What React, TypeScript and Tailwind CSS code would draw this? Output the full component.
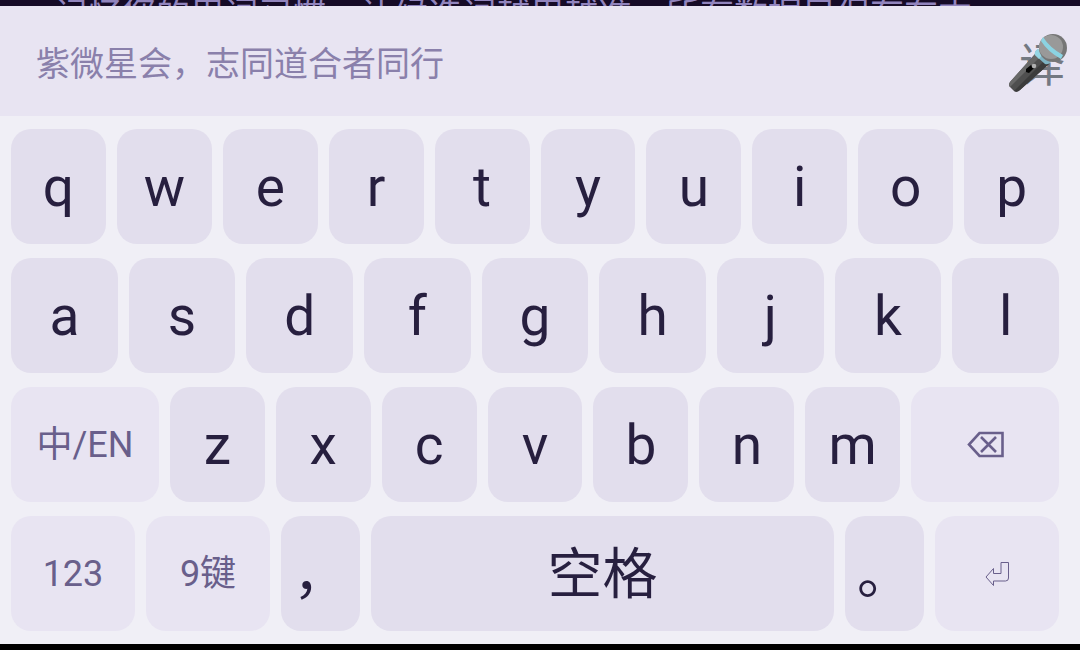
import { clsx } from "clsx";

const topRow = ["q", "w", "e", "r", "t", "y", "u", "i", "o", "p"];
const homeRow = ["a", "s", "d", "f", "g", "h", "j", "k", "l"];
const bottomRow = ["z", "x", "c", "v", "b", "n", "m"];

type KeyProps = {
  children: React.ReactNode;
  label?: string;
  width?: string;
  soft?: boolean;
};

function Key({ children, label, width = "flex-1", soft = false }: KeyProps) {
  return (
    <button
      type="button"
      aria-label={label}
      className={clsx(
        "flex h-[115px] min-w-0 items-center justify-center rounded-[20px]",
        width,
        soft
          ? "bg-[#e8e4f2] text-4xl text-[#695f8b]"
          : "bg-[#e2deed] text-[55px] leading-[64px] text-[#271f3f]"
      )}
    >
      {children}
    </button>
  );
}

function Microphone() {
  return (
    <svg viewBox="0 1 60 60" className="h-[60px] w-[60px]" aria-hidden="true">
      <path d="M28 20 L2 49 Q0 52 2 54 L6 58 Q9 60 12 57 L41 31 Z" fill="#4f4f4f" />
      <path d="M28 20 L2 49 Q0 52 2 54 L32 24 Z" fill="#686868" />
      <path d="M37 27 L6 58 Q9 60 12 57 L41 31 Z" fill="#3c3c3c" />
      <path d="M30 16 Q26 18 27 22 L37 31 Q41 32 43 28 Z" fill="#7fb4c4" />
      <path d="M30 16 Q26 18 27 22 L31 26 L35 21 Z" fill="#94d5e4" />
      <circle cx="45" cy="15" r="14" fill="#767676" />
      <circle cx="43" cy="14" r="12" fill="#999999" />
      <path d="M35 4 Q42 15 55 22 L53 26 Q40 19 33 8 Z" fill="#8bd3e2" />
      <path d="M18 36 L23 32 L26 35 L21 40 L18 39 Z" fill="#050505" />
      <circle cx="26" cy="33" r="2.3" fill="#b0b0b0" />
    </svg>
  );
}

function BackspaceIcon() {
  return (
    <svg viewBox="0 0 38 28" className="h-7 w-[38px]" fill="none" stroke="currentColor" aria-hidden="true">
      <path d="M13.5 2 H36.5 V25 H13.5 L3 13.5 Z" strokeWidth="2.6" />
      <path d="M15 6 L30 21 M30 6 L15 21" strokeWidth="2.6" />
    </svg>
  );
}

function EnterIcon() {
  return (
    <svg viewBox="0 0 26 26" className="h-[26px] w-[26px]" fill="none" stroke="currentColor" aria-hidden="true">
      <path d="M17 1.5 H24.5 V17 Q24.5 20 21.5 20 H9.5 V24.5 L2 16 L9.5 7.5 V12.5 H17 Z" />
    </svg>
  );
}

function App() {
  return (
    <div className="flex min-h-screen flex-col bg-black font-[Roboto,'Noto_Sans_CJK_SC',sans-serif]">
      <div className="h-1.5 overflow-hidden bg-[#160b27] px-[54px]">
        <p className="-mt-1.5 whitespace-nowrap text-[34px] leading-10 text-[#9184bd]">
          记忆您的用词习惯，让候选词越用越准。所有数据只保存在本
        </p>
      </div>

      <header className="flex h-[110px] items-center justify-between bg-[#e8e4f2] pl-9 pr-3 pt-1.5">
        <p className="text-[34px] leading-10 text-[#8a80ab]">
          紫微星会，志同道合者同行
        </p>
        <button
          type="button"
          aria-label="语音翻译"
          className="relative flex h-[60px] w-[60px] items-center justify-end pr-[3px]"
        >
          <span className="pt-0.5 text-[46px] leading-[60px] text-[#747982]">译</span>
          <span className="absolute inset-0">
            <Microphone />
          </span>
        </button>
      </header>

      <main className="flex flex-col gap-3.5 bg-[#f0eff6] py-[13px] pl-[11px] pr-[21px]">
        <div className="flex gap-[11px]">
          {topRow.map((letter) => (
            <Key key={letter}>{letter}</Key>
          ))}
        </div>
        <div className="flex gap-[11px]">
          {homeRow.map((letter) => (
            <Key key={letter}>{letter}</Key>
          ))}
        </div>
        <div className="flex gap-[11px]">
          <Key soft width="flex-[148]">中/EN</Key>
          {bottomRow.map((letter) => (
            <Key key={letter} width="flex-[95]">{letter}</Key>
          ))}
          <Key soft width="flex-[148]" label="删除">
            <BackspaceIcon />
          </Key>
        </div>
        <div className="flex gap-[11px]">
          <Key soft width="flex-[124]">123</Key>
          <Key soft width="flex-[124]">9键</Key>
          <Key width="flex-[79]">，</Key>
          <Key width="flex-[463]">空格</Key>
          <Key width="flex-[79]">。</Key>
          <Key soft width="flex-[124]" label="换行">
            <EnterIcon />
          </Key>
        </div>
      </main>
    </div>
  );
}

export default App;
